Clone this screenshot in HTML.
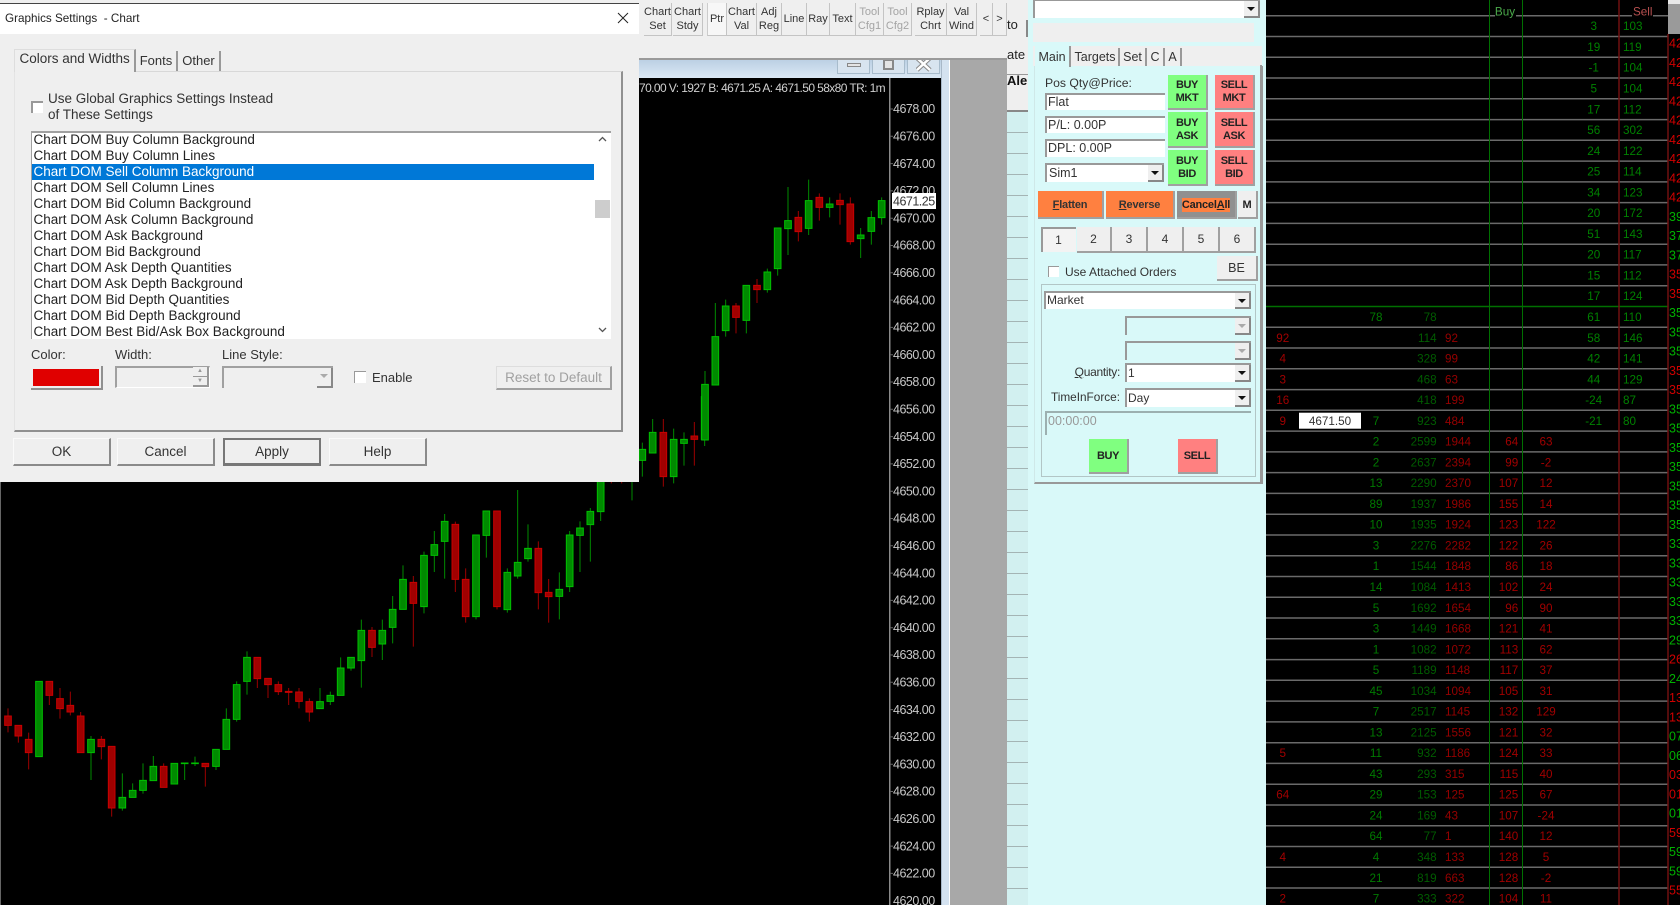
<!DOCTYPE html>
<html><head><meta charset="utf-8"><title>Graphics Settings - Chart</title>
<style>
html,body{margin:0;padding:0;width:1680px;height:905px;overflow:hidden;background:#000;font-family:"Liberation Sans",sans-serif;font-size:12px;color:#222}
.a{position:absolute;box-sizing:border-box;white-space:nowrap}
.b{position:absolute;box-sizing:border-box;background:#efefef;border-right:2px solid #a0a0a0;border-bottom:2px solid #a0a0a0;display:flex;align-items:center;justify-content:center;text-align:center;white-space:nowrap}
.t{position:absolute;box-sizing:border-box;background:#efefef;border-right:1px solid #c4c4c4;border-bottom:1px solid #c4c4c4;display:flex;align-items:center;justify-content:center;text-align:center;font-size:11px;line-height:14px;color:#333;white-space:nowrap}
.s{position:absolute;box-sizing:border-box;background:#fff;border-top:2px solid #999;border-left:2px solid #999;white-space:nowrap;padding-left:1px;padding-bottom:2px;color:#333;display:flex;align-items:center}
.ar{position:absolute;box-sizing:border-box;background:#efefef;border-right:2px solid #888;border-bottom:2px solid #888;top:0;bottom:0;right:0;width:16px}
.ar:after{content:"";position:absolute;left:3px;top:6px;border-left:4px solid transparent;border-right:4px solid transparent;border-top:4px solid #111}
.ar.d:after{border-top-color:#aaa}
.tab{position:absolute;box-sizing:border-box;border-right:2px solid #999;display:flex;align-items:center;justify-content:center;color:#333}
.li{position:absolute;left:33.5px;font-size:13.5px;line-height:16px;color:#222;white-space:nowrap}
.db{position:absolute;box-sizing:border-box;background:#efefef;border-top:1px solid #fafafa;border-left:1px solid #fafafa;border-right:2px solid #8a8a8a;border-bottom:2px solid #8a8a8a;display:flex;align-items:center;justify-content:center;font-size:13.5px;color:#333;top:438px;height:28px;width:98px}
.cb{position:absolute;box-sizing:border-box;background:#fff;border-top:2px solid #999;border-left:2px solid #999}
.gb{background:#80ff80;color:#222;font-weight:bold;line-height:13px;font-size:11px;letter-spacing:-.4px;padding-top:1px}
.rb{background:#ff8080;color:#222;font-weight:bold;line-height:13px;font-size:11px;letter-spacing:-.4px;padding-top:1px}
.ob{font-weight:bold;font-size:11px;letter-spacing:-.2px;color:#333;padding-top:2px}
svg text{font-family:"Liberation Sans",sans-serif}
.p text{font-size:12.5px;letter-spacing:-.5px;fill:#c8c8c8}
.d text{font-size:11.7px}
.ca text{fill:#a00000;text-anchor:middle}
.cb2 text{fill:#007a00;text-anchor:middle}
.cc text{fill:#005c00;text-anchor:end}
.cd text{fill:#960000}
.ce text{fill:#a00000;text-anchor:end}
.cf text{fill:#a00000;text-anchor:middle}
.cg text{fill:#008000;text-anchor:middle}
.ch text{fill:#008000}
.kr text{fill:#d00000;font-size:12.5px}
.kg text{fill:#00b000;font-size:12.5px}
</style></head>
<body>

<!-- chart black area + candles -->
<svg class="a" style="left:0;top:0" width="1680" height="905" viewBox="0 0 1680 905">
<rect x="0" y="0" width="941" height="905" fill="#000"/>
<rect x="0" y="470" width="1" height="435" fill="#666"/>
<g transform="translate(0,470) scale(.33333)">
<path fill="none" stroke="#9c0000" stroke-width="3" d="M24 715V787M55 766V818M86 788V898M148 634V705M180 654V746M211 665V736M242 726V848M304 798V868M335 829V1040M491 880V952M616 880V950M772 562V654M804 625V684M835 634V675M866 654V705M897 654V715M928 685V755M1116 471V561M1240 318V530"/>
<path fill="none" stroke="#008a00" stroke-width="3" d="M117 634V860M273 798V930M367 910V1022M398 940V982M429 880V971M460 858V932M523 880V942M554 880V930M585 860V888M648 838V900M679 715V838M710 634V755M741 544V674M960 654V716M991 665V705M1022 562V676M1053 562V602M1084 449V653M1147 449V570M1178 378V520M1209 286V418M1272 245V430M1303 183V306M1334 132V326"/>
<path fill="#a00000" stroke="#c80000" stroke-width="3" d="M14 738h20V766h-20zM45 766h20V798h-20zM76 808h20V848h-20zM138 634h20V676h-20zM170 686h20V716h-20zM201 706h20V726h-20zM232 738h20V848h-20zM294 808h20V830h-20zM325 829h20V1014h-20zM481 889h20V952h-20zM606 880h20V890h-20zM762 562h20V626h-20zM794 625h20V644h-20zM825 644h20V665h-20zM856 664h20V667h-20zM887 666h20V694h-20zM918 695h20V726h-20zM1106 481h20V532h-20zM1230 337h20V400h-20z"/>
<path fill="#008a00" stroke="#00c000" stroke-width="3" d="M107 634h20V860h-20zM263 808h20V848h-20zM357 982h20V1014h-20zM388 961h20V982h-20zM419 931h20V961h-20zM450 889h20V932h-20zM513 880h20V942h-20zM544 879h20V881h-20zM575 879h20V881h-20zM638 838h20V889h-20zM669 748h20V838h-20zM700 644h20V748h-20zM731 562h20V634h-20zM950 695h20V716h-20zM981 676h20V694h-20zM1012 594h20V676h-20zM1043 562h20V594h-20zM1074 481h20V572h-20zM1137 481h20V522h-20zM1168 418h20V472h-20zM1199 328h20V418h-20zM1262 256h20V410h-20zM1293 224h20V256h-20zM1324 154h20V214h-20z"/>
</g>
<g transform="translate(450,400) scale(.33333)">
<path fill="none" stroke="#9c0000" stroke-width="3" d="M16 365V576M47 505V668M141 333V628M265 424V628M296 537V668M484 200V250M515 200V250M640 57V260M733 66V197"/>
<path fill="none" stroke="#008a00" stroke-width="3" d="M78 405V658M109 333V473M172 505V638M203 270V536M234 373V485M328 517V658M359 393V576M390 364V516M421 324V485M452 200V363M546 200V301M577 128V230M608 57V159M671 86V250M702 97V197M764 0V138"/>
<path fill="#a00000" stroke="#c80000" stroke-width="3" d="M6 373h20V538h-20zM37 538h20V650h-20zM131 333h20V620h-20zM255 445h20V578h-20zM286 577h20V590h-20zM630 97h20V230h-20zM723 108h20V118h-20z"/>
<path fill="#008a00" stroke="#00c000" stroke-width="3" d="M68 405h20V650h-20zM99 333h20V406h-20zM162 517h20V629h-20zM193 487h20V528h-20zM224 445h20V476h-20zM318 568h20V589h-20zM349 405h20V560h-20zM380 384h20V406h-20zM411 334h20V374h-20zM442 200h20V335h-20zM567 148h20V181h-20zM598 97h20V159h-20zM661 118h20V230h-20zM692 118h20V130h-20zM754 -10h20V118h-20z"/>
</g>
<g transform="translate(700,130) scale(.33333)">
<path fill="none" stroke="#9c0000" stroke-width="3" d="M108 519V610M171 447V519M295 243V334M358 190V272M420 190V284M451 202V344"/>
<path fill="none" stroke="#008a00" stroke-width="3" d="M15 723V800M46 519V765M77 509V620M139 465V610M202 416V488M233 294V437M264 171V375M326 149V315M389 202V262M482 294V384M514 243V344M545 202V284"/>
<path fill="#a00000" stroke="#c80000" stroke-width="3" d="M98 528h20V562h-20zM161 466h20V479h-20zM285 262h20V305h-20zM348 202h20V232h-20zM410 211h20V224h-20zM441 222h20V335h-20z"/>
<path fill="#008a00" stroke="#00c000" stroke-width="3" d="M5 763h20V930h-20zM36 620h20V765h-20zM67 528h20V602h-20zM129 466h20V571h-20zM192 426h20V479h-20zM223 294h20V416h-20zM254 272h20V296h-20zM316 212h20V295h-20zM379 222h20V232h-20zM472 315h20V326h-20zM504 263h20V304h-20zM535 212h20V263h-20z"/>
</g>
<!-- price axis -->
<rect x="889" y="78" width="1.5" height="827" fill="#8a8a8a"/>
<path stroke="#666" d="M890 109h3M890 136.3h3M890 163.6h3M890 190.9h3M890 218.2h3M890 245.5h3M890 272.8h3M890 300.1h3M890 327.4h3M890 354.7h3M890 382h3M890 409.3h3M890 436.6h3M890 463.9h3M890 491.2h3M890 518.5h3M890 545.8h3M890 573.1h3M890 600.4h3M890 627.7h3M890 655h3M890 682.3h3M890 709.6h3M890 736.9h3M890 764.2h3M890 791.5h3M890 818.8h3M890 846.1h3M890 873.4h3"/>
<g class="p" transform="translate(0,-.3)">
<text x="893" y="113.5">4678.00</text><text x="893" y="140.8">4676.00</text><text x="893" y="168.1">4674.00</text><text x="893" y="195.4">4672.00</text><text x="893" y="222.7">4670.00</text><text x="893" y="250">4668.00</text><text x="893" y="277.3">4666.00</text><text x="893" y="304.6">4664.00</text><text x="893" y="331.9">4662.00</text><text x="893" y="359.2">4660.00</text><text x="893" y="386.5">4658.00</text><text x="893" y="413.8">4656.00</text><text x="893" y="441.1">4654.00</text><text x="893" y="468.4">4652.00</text><text x="893" y="495.7">4650.00</text><text x="893" y="523">4648.00</text><text x="893" y="550.3">4646.00</text><text x="893" y="577.6">4644.00</text><text x="893" y="604.9">4642.00</text><text x="893" y="632.2">4640.00</text><text x="893" y="659.5">4638.00</text><text x="893" y="686.8">4636.00</text><text x="893" y="714.1">4634.00</text><text x="893" y="741.4">4632.00</text><text x="893" y="768.7">4630.00</text><text x="893" y="796">4628.00</text><text x="893" y="823.3">4626.00</text><text x="893" y="850.6">4624.00</text><text x="893" y="877.9">4622.00</text><text x="893" y="905.2">4620.00</text>
</g>
<rect x="892" y="193" width="44" height="16" fill="#fff"/>
<text x="893" y="205.5" font-size="12.5" letter-spacing="-.5" fill="#333">4671.25</text>
</svg>

<!-- chart info text -->
<div class="a" style="left:639px;top:79px;width:250px;height:18px;overflow:hidden;color:#d0d0d0;font-size:12px;line-height:18px;letter-spacing:-.6px">70.00 V: 1927 B: 4671.25 A: 4671.50 58x80 TR: 1m</div>

<!-- window header -->
<div class="a" style="left:639px;top:60px;width:311px;height:18px;background:linear-gradient(#bcd0e4,#dbe8f4)"></div>
<div class="a" style="left:941px;top:60px;width:9px;height:845px;background:#d4e2f0;border-left:1px solid #a8b8c8;border-right:1px solid #fff"></div>
<div class="a" style="left:837px;top:60px;width:33px;height:14px;background:#d8e4ef;border:1px solid #a8bccc;border-top:0"><div class="a" style="left:9px;top:3px;width:14px;height:4px;background:#e4e4e4;border:1px solid #888"></div></div>
<div class="a" style="left:872px;top:60px;width:33px;height:14px;background:#d8e4ef;border:1px solid #a8bccc;border-top:0"><div class="a" style="left:10px;top:0;width:11px;height:10px;background:#e4e4e4;border:1px solid #888;border-width:1px 2px 2px 2px"></div></div>
<div class="a" style="left:907px;top:60px;width:33px;height:14px;background:#d8e4ef;border:1px solid #a8bccc;border-top:0"></div>
<svg class="a" style="left:916px;top:60px" width="16" height="12" viewBox="0 0 16 12"><path d="M1 -2L14 10M14 -2L1 10" stroke="#888" stroke-width="4.500" fill="none"/><path d="M1 -2L14 10M14 -2L1 10" stroke="#fff" stroke-width="2.500" fill="none"/></svg>
<div class="a" style="left:950px;top:60px;width:57px;height:845px;background:#a8a8a8"></div>

<!-- toolbar -->
<div class="a" style="left:638px;top:0;width:369px;height:60px;background:#efefef;border-bottom:2px solid #9a9a9a"></div>
<div class="t" style="left:644px;top:3px;width:28px;height:33px">Chart<br>Set</div>
<div class="t" style="left:673px;top:3px;width:30px;height:33px">Chart<br>Stdy</div>
<div class="t" style="left:707px;top:3px;width:20px;height:33px;background:#f7f7f7;border-left:1px solid #ccc">Ptr</div>
<div class="t" style="left:727px;top:3px;width:30px;height:33px">Chart<br>Val</div>
<div class="t" style="left:757px;top:3px;width:25px;height:33px">Adj<br>Reg</div>
<div class="t" style="left:782px;top:3px;width:25px;height:33px">Line</div>
<div class="t" style="left:807px;top:3px;width:23px;height:33px">Ray</div>
<div class="t" style="left:830px;top:3px;width:26px;height:33px">Text</div>
<div class="t" style="left:856px;top:3px;width:28px;height:33px;color:#a4a4a4">Tool<br>Cfg1</div>
<div class="t" style="left:884px;top:3px;width:28px;height:33px;color:#a4a4a4">Tool<br>Cfg2</div>
<div class="t" style="left:915px;top:3px;width:32px;height:33px">Rplay<br>Chrt</div>
<div class="t" style="left:947px;top:3px;width:30px;height:33px">Val<br>Wind</div>
<div class="t" style="left:980px;top:3px;width:13px;height:33px">&lt;</div>
<div class="t" style="left:993px;top:3px;width:14px;height:33px">&gt;</div>

<!-- left partial window strip -->
<div class="a" style="left:1007px;top:0;width:21px;height:112px;background:#efefef"></div>
<div class="a" style="left:1007px;top:74px;width:21px;height:1px;background:#999"></div>
<div class="a" style="left:1007px;top:110px;width:21px;height:2px;background:#888"></div>
<div class="a" style="left:1007px;top:17px;font-size:13px;color:#222;line-height:16px">to</div>
<div class="a" style="left:1007px;top:47px;font-size:13px;color:#222;line-height:16px">ate</div>
<div class="a" style="left:1007px;top:73px;width:21px;overflow:hidden;font-size:13px;font-weight:bold;color:#111;line-height:16px">Aler</div>
<div class="a" style="left:1026px;top:20px;width:2px;height:17px;background:#888"></div>
<div class="a" style="left:1007px;top:112px;width:21px;height:793px;background:repeating-linear-gradient(#d2f0f0 0 20px,#a4b4b4 20px 21px)"></div>

<!-- trade panel -->
<div class="a" style="left:1028px;top:0;width:238px;height:905px;background:#d9f9f9"></div>
<div class="s" style="left:1033px;top:-1px;width:227px;height:19px"><div class="ar" style="width:16px"></div></div>
<div class="a" style="left:1033px;top:23px;width:221px;height:19px;background:#efefef"></div>
<!-- tab strip -->
<div class="a" style="left:1033px;top:46px;width:229px;height:20px;background:#efefef"></div>
<div class="a" style="left:1034px;top:66px;width:229px;height:418px;background:#d9f9f9;border-right:2px solid #999;border-bottom:2px solid #999;border-left:1px solid #cfe8e8"></div>
<div class="tab" style="left:1035px;top:46px;width:36px;height:21px;background:#d9f9f9;font-size:12.5px">Main</div>
<div class="tab" style="left:1072px;top:48px;width:48px;height:18px;font-size:12.5px">Targets</div>
<div class="tab" style="left:1120px;top:48px;width:27px;height:18px;font-size:12.5px">Set</div>
<div class="tab" style="left:1147px;top:48px;width:18px;height:18px;font-size:12.5px">C</div>
<div class="tab" style="left:1165px;top:48px;width:17px;height:18px;font-size:12.5px">A</div>

<div class="a" style="left:1045px;top:76px;font-size:12.2px;line-height:15px;color:#333">Pos Qty@Price:</div>
<div class="s" style="left:1045px;top:93px;width:120px;height:17px;font-size:12.5px">Flat</div>
<div class="s" style="left:1045px;top:116px;width:120px;height:17px;font-size:12.5px">P/L: 0.00P</div>
<div class="s" style="left:1045px;top:139px;width:120px;height:18px;font-size:12.5px">DPL: 0.00P</div>
<div class="s" style="left:1045px;top:163px;width:119px;height:19px;font-size:12.5px;padding-left:2px">Sim1<div class="ar"></div></div>

<div class="b gb" style="left:1168px;top:75px;width:40px;height:35px">BUY<br>MKT</div>
<div class="b rb" style="left:1215px;top:75px;width:40px;height:35px">SELL<br>MKT</div>
<div class="b gb" style="left:1168px;top:112px;width:40px;height:36px">BUY<br>ASK</div>
<div class="b rb" style="left:1215px;top:112px;width:40px;height:36px">SELL<br>ASK</div>
<div class="b gb" style="left:1168px;top:150px;width:40px;height:36px">BUY<br>BID</div>
<div class="b rb" style="left:1215px;top:150px;width:40px;height:36px">SELL<br>BID</div>

<div class="b ob" style="left:1038px;top:191px;width:66px;height:28px;background:#ff8040"><span><u>F</u>latten</span></div>
<div class="b ob" style="left:1106px;top:191px;width:69px;height:28px;background:#ff8040"><span><u>R</u>everse</span></div>
<div class="b ob" style="left:1177px;top:191px;width:60px;height:28px;background:#909090;color:#222"><span style="background:#ff8040;padding:1px 0">Cancel<u>A</u>ll</span></div>
<div class="b ob" style="left:1238px;top:191px;width:20px;height:28px;color:#222">M</div>

<div class="b" style="left:1041px;top:227px;width:35px;height:25px;background:#f3f3f3;border:0;border-top:2px solid #999;border-left:2px solid #999;font-size:12px;color:#333;padding-right:2px;padding-bottom:2px">1</div>
<div class="b" style="left:1077px;top:227px;width:35px;height:26px;font-size:12px;color:#333">2</div>
<div class="b" style="left:1112px;top:227px;width:36px;height:26px;font-size:12px;color:#333">3</div>
<div class="b" style="left:1148px;top:227px;width:36px;height:26px;font-size:12px;color:#333">4</div>
<div class="b" style="left:1184px;top:227px;width:36px;height:26px;font-size:12px;color:#333">5</div>
<div class="b" style="left:1220px;top:227px;width:36px;height:26px;font-size:12px;color:#333">6</div>

<div class="cb" style="left:1048px;top:266px;width:11px;height:11px;border-width:1px"></div>
<div class="a" style="left:1065px;top:264px;font-size:12px;line-height:16px;color:#333">Use Attached Orders</div>
<div class="b" style="left:1217px;top:256px;width:41px;height:25px;font-size:12.5px;color:#333">BE</div>

<div class="a" style="left:1041px;top:284px;width:215px;height:193px;border:1px solid #b2c6c6"></div>
<div class="s" style="left:1044px;top:291px;width:207px;height:18px;font-size:12px">Market<div class="ar"></div></div>
<div class="s" style="left:1125px;top:316px;width:126px;height:19px;background:#d9f9f9"><div class="ar d"></div></div>
<div class="s" style="left:1125px;top:341px;width:126px;height:19px;background:#d9f9f9"><div class="ar d"></div></div>
<div class="a" style="left:1040px;top:364px;width:80px;text-align:right;font-size:12px;letter-spacing:-.3px;line-height:16px;color:#333"><u>Q</u>uantity:</div>
<div class="s" style="left:1125px;top:363px;width:126px;height:19px;font-size:12px">1<div class="ar"></div></div>
<div class="a" style="left:1040px;top:389px;width:80px;text-align:right;font-size:11.8px;line-height:16px;color:#333">TimeInForce:</div>
<div class="s" style="left:1125px;top:388px;width:126px;height:19px;font-size:12px">Day<div class="ar"></div></div>
<div class="a" style="left:1045px;top:411px;width:206px;height:24px;border-top:2px solid #9cb0b0;border-left:2px solid #9cb0b0;color:#999;font-size:12.5px;line-height:16px;padding-left:1px">00:00:00</div>
<div class="b gb" style="left:1089px;top:439px;width:40px;height:35px">BUY</div>
<div class="b rb" style="left:1178px;top:439px;width:40px;height:35px">SELL</div>

<!-- DOM -->
<svg class="a d" style="left:0;top:0" width="1680" height="905" viewBox="0 0 1680 905">
<rect x="1266" y="0" width="414" height="905" fill="#000"/>
<path fill="none" stroke="#6a6a6a" stroke-width="1.5" d="M1266 15.7H1668M1266 36.5H1668M1266 57.2H1668M1266 78H1668M1266 98.8H1668M1266 119.6H1668M1266 140.3H1668M1266 161.1H1668M1266 181.9H1668M1266 202.6H1668M1266 223.4H1668M1266 244.2H1668M1266 264.9H1668M1266 285.7H1668M1266 327.3H1668M1266 348H1668M1266 368.8H1668M1266 389.6H1668M1266 410.3H1668M1266 431.1H1668M1266 451.9H1668M1266 472.6H1668M1266 493.4H1668M1266 514.2H1668M1266 535H1668M1266 555.7H1668M1266 576.5H1668M1266 597.3H1668M1266 618H1668M1266 638.8H1668M1266 659.6H1668M1266 680.3H1668M1266 701.1H1668M1266 721.9H1668M1266 742.7H1668M1266 763.4H1668M1266 784.2H1668M1266 805H1668M1266 825.7H1668M1266 846.5H1668M1266 867.3H1668M1266 888H1668"/>
<path fill="none" stroke="#007000" stroke-width="1.5" d="M1266 306.5H1668"/>
<rect x="1495" y="13" width="21" height="5" fill="#000"/>
<rect x="1632" y="13" width="21" height="5" fill="#000"/>
<path fill="none" stroke="#007000" stroke-width="1" d="M1489.5 0V905M1522.5 0V905"/>
<path fill="none" stroke="#701010" stroke-width="1.5" d="M1619 0V905M1668 34V905"/>
<text x="1505" y="15.5" text-anchor="middle" fill="#4aa84a" font-size="12">Buy</text>
<text x="1642.7" y="15.5" text-anchor="middle" fill="#b85050" font-size="12">Sell</text>
<rect x="1668" y="0" width="12" height="34" fill="#9a9a9a"/>
<rect x="1668" y="0" width="12" height="4" fill="#e8e8e8"/>
<g transform="translate(0,-.7)">
<g class="cg">
<text x="1593.7" y="30.9">3</text><text x="1593.7" y="51.7">19</text><text x="1593.7" y="72.4">-1</text><text x="1593.7" y="93.2">5</text><text x="1593.7" y="114">17</text><text x="1593.7" y="134.8">56</text><text x="1593.7" y="155.5">24</text><text x="1593.7" y="176.3">25</text><text x="1593.7" y="197.1">34</text><text x="1593.7" y="217.8">20</text><text x="1593.7" y="238.6">51</text><text x="1593.7" y="259.4">20</text><text x="1593.7" y="280.1">15</text><text x="1593.7" y="300.9">17</text><text x="1593.7" y="321.7">61</text><text x="1593.7" y="342.5">58</text><text x="1593.7" y="363.2">42</text><text x="1593.7" y="384">44</text><text x="1593.7" y="404.8">-24</text><text x="1593.7" y="425.5">-21</text>
</g>
<g class="ch">
<text x="1623" y="30.9">103</text><text x="1623" y="51.7">119</text><text x="1623" y="72.4">104</text><text x="1623" y="93.2">104</text><text x="1623" y="114">112</text><text x="1623" y="134.8">302</text><text x="1623" y="155.5">122</text><text x="1623" y="176.3">114</text><text x="1623" y="197.1">123</text><text x="1623" y="217.8">172</text><text x="1623" y="238.6">143</text><text x="1623" y="259.4">117</text><text x="1623" y="280.1">112</text><text x="1623" y="300.9">124</text><text x="1623" y="321.7">110</text><text x="1623" y="342.5">146</text><text x="1623" y="363.2">141</text><text x="1623" y="384">129</text><text x="1623" y="404.8">87</text><text x="1623" y="425.5">80</text>
</g>
<g class="ca">
<text x="1282.7" y="342.5">92</text><text x="1282.7" y="363.2">4</text><text x="1282.7" y="384">3</text><text x="1282.7" y="404.8">16</text><text x="1282.7" y="425.5">9</text><text x="1282.7" y="757.9">5</text><text x="1282.7" y="799.4">64</text><text x="1282.7" y="861.7">4</text><text x="1282.7" y="903.2">2</text>
</g>
<g class="cb2">
<text x="1376" y="321.7">78</text><text x="1376" y="425.5">7</text><text x="1376" y="446.3">2</text><text x="1376" y="467.1">2</text><text x="1376" y="487.8">13</text><text x="1376" y="508.6">89</text><text x="1376" y="529.4">10</text><text x="1376" y="550.2">3</text><text x="1376" y="570.9">1</text><text x="1376" y="591.7">14</text><text x="1376" y="612.5">5</text><text x="1376" y="633.2">3</text><text x="1376" y="654">1</text><text x="1376" y="674.8">5</text><text x="1376" y="695.5">45</text><text x="1376" y="716.3">7</text><text x="1376" y="737.1">13</text><text x="1376" y="757.9">11</text><text x="1376" y="778.6">43</text><text x="1376" y="799.4">29</text><text x="1376" y="820.2">24</text><text x="1376" y="840.9">64</text><text x="1376" y="861.7">4</text><text x="1376" y="882.5">21</text><text x="1376" y="903.2">7</text>
</g>
<g class="cc">
<text x="1436.7" y="321.7">78</text><text x="1436.7" y="342.5">114</text><text x="1436.7" y="363.2">328</text><text x="1436.7" y="384">468</text><text x="1436.7" y="404.8">418</text><text x="1436.7" y="425.5">923</text><text x="1436.7" y="446.3">2599</text><text x="1436.7" y="467.1">2637</text><text x="1436.7" y="487.8">2290</text><text x="1436.7" y="508.6">1937</text><text x="1436.7" y="529.4">1935</text><text x="1436.7" y="550.2">2276</text><text x="1436.7" y="570.9">1544</text><text x="1436.7" y="591.7">1084</text><text x="1436.7" y="612.5">1692</text><text x="1436.7" y="633.2">1449</text><text x="1436.7" y="654">1082</text><text x="1436.7" y="674.8">1189</text><text x="1436.7" y="695.5">1034</text><text x="1436.7" y="716.3">2517</text><text x="1436.7" y="737.1">2125</text><text x="1436.7" y="757.9">932</text><text x="1436.7" y="778.6">293</text><text x="1436.7" y="799.4">153</text><text x="1436.7" y="820.2">169</text><text x="1436.7" y="840.9">77</text><text x="1436.7" y="861.7">348</text><text x="1436.7" y="882.5">819</text><text x="1436.7" y="903.2">333</text>
</g>
<g class="cd">
<text x="1445" y="342.5">92</text><text x="1445" y="363.2">99</text><text x="1445" y="384">63</text><text x="1445" y="404.8">199</text><text x="1445" y="425.5">484</text><text x="1445" y="446.3">1944</text><text x="1445" y="467.1">2394</text><text x="1445" y="487.8">2370</text><text x="1445" y="508.6">1986</text><text x="1445" y="529.4">1924</text><text x="1445" y="550.2">2282</text><text x="1445" y="570.9">1848</text><text x="1445" y="591.7">1413</text><text x="1445" y="612.5">1654</text><text x="1445" y="633.2">1668</text><text x="1445" y="654">1072</text><text x="1445" y="674.8">1148</text><text x="1445" y="695.5">1094</text><text x="1445" y="716.3">1145</text><text x="1445" y="737.1">1556</text><text x="1445" y="757.9">1186</text><text x="1445" y="778.6">315</text><text x="1445" y="799.4">125</text><text x="1445" y="820.2">43</text><text x="1445" y="840.9">1</text><text x="1445" y="861.7">133</text><text x="1445" y="882.5">663</text><text x="1445" y="903.2">322</text>
</g>
<g class="ce">
<text x="1518.3" y="446.3">64</text><text x="1518.3" y="467.1">99</text><text x="1518.3" y="487.8">107</text><text x="1518.3" y="508.6">155</text><text x="1518.3" y="529.4">123</text><text x="1518.3" y="550.2">122</text><text x="1518.3" y="570.9">86</text><text x="1518.3" y="591.7">102</text><text x="1518.3" y="612.5">96</text><text x="1518.3" y="633.2">121</text><text x="1518.3" y="654">113</text><text x="1518.3" y="674.8">117</text><text x="1518.3" y="695.5">105</text><text x="1518.3" y="716.3">132</text><text x="1518.3" y="737.1">121</text><text x="1518.3" y="757.9">124</text><text x="1518.3" y="778.6">115</text><text x="1518.3" y="799.4">125</text><text x="1518.3" y="820.2">107</text><text x="1518.3" y="840.9">140</text><text x="1518.3" y="861.7">128</text><text x="1518.3" y="882.5">128</text><text x="1518.3" y="903.2">104</text>
</g>
<g class="cf">
<text x="1546" y="446.3">63</text><text x="1546" y="467.1">-2</text><text x="1546" y="487.8">12</text><text x="1546" y="508.6">14</text><text x="1546" y="529.4">122</text><text x="1546" y="550.2">26</text><text x="1546" y="570.9">18</text><text x="1546" y="591.7">24</text><text x="1546" y="612.5">90</text><text x="1546" y="633.2">41</text><text x="1546" y="654">62</text><text x="1546" y="674.8">37</text><text x="1546" y="695.5">31</text><text x="1546" y="716.3">129</text><text x="1546" y="737.1">32</text><text x="1546" y="757.9">33</text><text x="1546" y="778.6">40</text><text x="1546" y="799.4">67</text><text x="1546" y="820.2">-24</text><text x="1546" y="840.9">12</text><text x="1546" y="861.7">5</text><text x="1546" y="882.5">-2</text><text x="1546" y="903.2">11</text>
</g>
</g>
<g class="kr">
<text x="1669" y="47.5">42</text><text x="1669" y="66.75">42</text><text x="1669" y="86">42</text><text x="1669" y="105.25">42</text><text x="1669" y="124.5">42</text><text x="1669" y="143.75">42</text><text x="1669" y="163">42</text><text x="1669" y="182.25">42</text><text x="1669" y="201.5">42</text><text x="1669" y="278.5">35</text><text x="1669" y="297.75">35</text><text x="1669" y="374.75">35</text><text x="1669" y="394">35</text><text x="1669" y="663.5">26</text><text x="1669" y="702">13</text><text x="1669" y="721.25">13</text><text x="1669" y="779">03</text><text x="1669" y="798.25">01</text><text x="1669" y="836.75">59</text><text x="1669" y="894.5">55</text>
</g>
<g class="kg">
<text x="1669" y="220.75">39</text><text x="1669" y="240">37</text><text x="1669" y="259.25">37</text><text x="1669" y="317">35</text><text x="1669" y="336.25">35</text><text x="1669" y="355.5">35</text><text x="1669" y="413.25">35</text><text x="1669" y="432.5">35</text><text x="1669" y="451.75">35</text><text x="1669" y="471">35</text><text x="1669" y="490.25">35</text><text x="1669" y="509.5">35</text><text x="1669" y="528.75">35</text><text x="1669" y="548">33</text><text x="1669" y="567.25">33</text><text x="1669" y="586.5">33</text><text x="1669" y="605.75">33</text><text x="1669" y="625">33</text><text x="1669" y="644.25">29</text><text x="1669" y="682.75">24</text><text x="1669" y="740.5">07</text><text x="1669" y="759.75">06</text><text x="1669" y="817.5">01</text><text x="1669" y="856">59</text><text x="1669" y="875.25">59</text>
</g>
<rect x="1299" y="412.7" width="62" height="16" fill="#fff"/>
<text x="1330" y="425" text-anchor="middle" fill="#333" font-size="12">4671.50</text>
</svg>

<!-- dialog -->
<div class="a" style="left:0;top:0;width:639px;height:482px;background:#efefef"></div>
<div class="a" style="left:0;top:3px;width:639px;height:1px;background:#444"></div>
<div class="a" style="left:0;top:4px;width:639px;height:30px;background:#fff"></div>
<div class="a" style="left:5px;top:11px;font-size:11.7px;line-height:16px;color:#222">Graphics Settings&nbsp; - Chart</div>
<svg class="a" style="left:617px;top:12px" width="12" height="12" viewBox="0 0 12 12"><path d="M1 1L11 11M11 1L1 11" stroke="#222" stroke-width="1" fill="none"/></svg>

<!-- dialog tab body -->
<div class="a" style="left:14px;top:71px;width:609px;height:361px;background:#efefef;border-top:1px solid #d8d8d8;border-left:1px solid #e4e4e4;border-right:2px solid #909090;border-bottom:2px solid #909090"></div>
<div class="a" style="left:14px;top:49px;width:122px;height:23px;background:#efefef;border-top:1px solid #ddd;border-left:1px solid #ddd;border-right:2px solid #999"></div>
<div class="a" style="left:19.5px;top:51px;font-size:13.5px;line-height:16px;color:#333">Colors and Widths</div>
<div class="a" style="left:136px;top:51px;width:42px;height:20px;border-right:2px solid #999;text-align:center;font-size:13px;line-height:20px;color:#333">Fonts</div>
<div class="a" style="left:178px;top:51px;width:43px;height:20px;border-right:2px solid #999;text-align:center;font-size:13px;line-height:20px;color:#333">Other</div>

<div class="cb" style="left:31px;top:101px;width:12px;height:12px"></div>
<div class="a" style="left:48px;top:91px;font-size:13.5px;line-height:16px;color:#333">Use Global Graphics Settings Instead<br>of These Settings</div>

<!-- listbox -->
<div class="a" style="left:31px;top:131px;width:580px;height:208px;background:#fff;border-top:2px solid #a0a0a0;border-left:1px solid #a0a0a0;overflow:hidden"></div>
<div class="a" style="left:32px;top:164px;width:562px;height:16px;background:#0078d7"></div>
<div class="li" style="top:132px">Chart DOM Buy Column Background</div>
<div class="li" style="top:148px">Chart DOM Buy Column Lines</div>
<div class="li" style="top:164px;color:#fff">Chart DOM Sell Column Background</div>
<div class="li" style="top:180px">Chart DOM Sell Column Lines</div>
<div class="li" style="top:196px">Chart DOM Bid Column Background</div>
<div class="li" style="top:212px">Chart DOM Ask Column Background</div>
<div class="li" style="top:228px">Chart DOM Ask Background</div>
<div class="li" style="top:244px">Chart DOM Bid Background</div>
<div class="li" style="top:260px">Chart DOM Ask Depth Quantities</div>
<div class="li" style="top:276px">Chart DOM Ask Depth Background</div>
<div class="li" style="top:292px">Chart DOM Bid Depth Quantities</div>
<div class="li" style="top:308px">Chart DOM Bid Depth Background</div>
<div class="li" style="top:324px;height:15px;overflow:hidden">Chart DOM Best Bid/Ask Box Background</div>
<div class="a" style="left:595px;top:200px;width:15px;height:18px;background:#cdcdcd"></div>
<svg class="a" style="left:598px;top:136px" width="9" height="6" viewBox="0 0 9 6"><path d="M1 5L4.5 1.500L8 5" stroke="#555" stroke-width="1.300" fill="none"/></svg>
<svg class="a" style="left:598px;top:327px" width="9" height="6" viewBox="0 0 9 6"><path d="M1 1L4.500 4.500L8 1" stroke="#555" stroke-width="1.300" fill="none"/></svg>

<!-- color row -->
<div class="a" style="left:31px;top:347px;font-size:13px;line-height:16px;color:#333">Color:</div>
<div class="a" style="left:115px;top:347px;font-size:13px;line-height:16px;color:#333">Width:</div>
<div class="a" style="left:222px;top:347px;font-size:13px;line-height:16px;color:#333">Line Style:</div>
<div class="a" style="left:31px;top:366px;width:72px;height:24px;background:#efefef;border-right:2px solid #909090;border-bottom:2px solid #909090"><div class="a" style="left:2px;top:3px;width:66px;height:17px;background:#e00000"></div></div>
<div class="a" style="left:115px;top:366px;width:95px;height:22px;border-top:2px solid #a0a0a0;border-left:2px solid #a0a0a0;border-right:1px solid #fff;border-bottom:1px solid #fff"></div>
<div class="a" style="left:193px;top:367px;width:16px;height:10px;background:#efefef;border-right:2px solid #999;border-bottom:1px solid #999;text-align:center;font-size:6px;line-height:9px;color:#999">▲</div>
<div class="a" style="left:193px;top:377px;width:16px;height:10px;background:#efefef;border-right:2px solid #999;border-bottom:2px solid #999;text-align:center;font-size:6px;line-height:9px;color:#999">▼</div>
<div class="a" style="left:222px;top:366px;width:111px;height:22px;border-top:2px solid #a0a0a0;border-left:2px solid #a0a0a0"><div class="ar d"></div></div>
<div class="cb" style="left:354px;top:371px;width:12px;height:12px;border-width:1px"></div>
<div class="a" style="left:372px;top:370px;font-size:13px;line-height:16px;color:#333">Enable</div>
<div class="b" style="left:496px;top:366px;width:116px;height:24px;border-color:#a0a0a0;color:#a0a0a0;font-size:13.5px;border-left:1px solid #ddd;border-top:1px solid #ddd">Reset to Default</div>

<div class="db" style="left:13px">OK</div>
<div class="db" style="left:117px">Cancel</div>
<div class="db" style="left:223px;border:2px solid #777;border-right-width:2px;border-bottom-width:3px">Apply</div>
<div class="db" style="left:329px">Help</div>

<div class="a" style="left:1260px;top:65px;width:2px;height:419px;background:#999"></div>

</body></html>
